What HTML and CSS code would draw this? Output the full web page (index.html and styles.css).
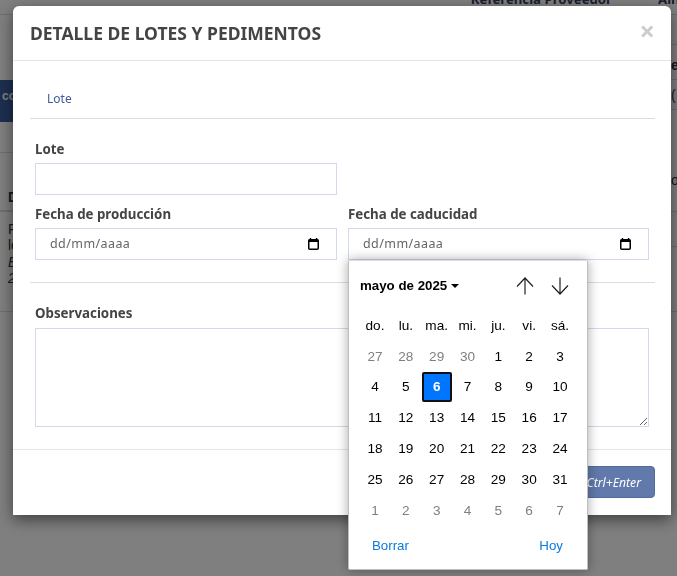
FILE: index.html
```html
<!DOCTYPE html>
<html lang="es">
<head>
<meta charset="utf-8">
<title>Detalle de lotes y pedimentos</title>
<link rel="stylesheet" href="styles.css">
</head>
<body>
<div class="page">
  <div class="bg-head"><span class="bg-ref">Referencia Proveedor</span><span class="bg-an">Aln</span></div>
  <div class="bg-strips">
    <div class="strip-left">
      <div class="sl sl-a"></div>
      <div class="sl sl-bar">co</div>
      <div class="sl sl-b"></div>
      <div class="sl sl-c">D</div>
      <div class="sl sl-d"><div>F</div><div>le</div><div><em>E</em></div><div><em>2</em></div></div>
    </div>
    <div class="strip-right">
      <div class="sr sr-a"></div>
      <div class="sr sr-b">ec</div>
      <div class="sr sr-c">(</div>
      <div class="sr sr-d">os</div>
      <div class="sr sr-e"></div>
      <div class="sr sr-f"></div>
    </div>
  </div>
</div>
<div class="backdrop"></div>
<div class="modal">
  <header class="modal-head">
    <h4 class="modal-title">DETALLE DE LOTES Y PEDIMENTOS</h4>
    <span class="close">&times;</span>
  </header>
  <div class="modal-body">
    <nav class="tabs"><a class="tab">Lote</a></nav>
    <form class="form">
      <div class="grid">
        <div class="field">
          <label class="label">Lote</label>
          <input class="control" type="text">
        </div>
        <div></div>
      </div>
      <div class="grid">
        <div class="field">
          <label class="label">Fecha de producción</label>
          <div class="control date"><span>dd/mm/aaaa</span>
            <svg class="cal-icon" width="11" height="12" viewBox="0 0 11 12"><path d="M2.5 0v1.5M8.5 0v1.5" stroke="#000" stroke-width="1.4" fill="none"/><rect x="0.75" y="1.8" width="9.5" height="9.45" rx="1" fill="none" stroke="#000" stroke-width="1.5"/><rect x="0.75" y="1.5" width="9.5" height="2.5" fill="#000"/></svg>
          </div>
        </div>
        <div class="field">
          <label class="label">Fecha de caducidad</label>
          <div class="control date"><span>dd/mm/aaaa</span>
            <svg class="cal-icon" width="11" height="12" viewBox="0 0 11 12"><path d="M2.5 0v1.5M8.5 0v1.5" stroke="#000" stroke-width="1.4" fill="none"/><rect x="0.75" y="1.8" width="9.5" height="9.45" rx="1" fill="none" stroke="#000" stroke-width="1.5"/><rect x="0.75" y="1.5" width="9.5" height="2.5" fill="#000"/></svg>
          </div>
        </div>
      </div>
    </form>
    <hr class="rule">
    <div class="form obs">
      <label class="label">Observaciones</label>
      <textarea class="control area"></textarea>
    </div>
  </div>
  <footer class="modal-foot">
    <button class="save" type="button">Ctrl+Enter</button>
  </footer>
</div>
<div class="picker">
  <div class="picker-head">
    <span class="month">mayo de 2025<i class="caret"></i></span>
    <span class="arrows">
      <svg width="18" height="18" viewBox="0 0 18 18"><path d="M9 17.5V1M1 9.5L9 1l8 8.5" fill="none" stroke="#222" stroke-width="1.2"/></svg>
      <svg width="18" height="18" viewBox="0 0 18 18"><path d="M9 .5V17M1 8.5L9 17l8-8.5" fill="none" stroke="#222" stroke-width="1.2"/></svg>
    </span>
  </div>
  <div class="days">
    <span>do.</span><span>lu.</span><span>ma.</span><span>mi.</span><span>ju.</span><span>vi.</span><span>sá.</span>
    <span class="off">27</span><span class="off">28</span><span class="off">29</span><span class="off">30</span><span>1</span><span>2</span><span>3</span>
    <span>4</span><span>5</span><span class="sel">6</span><span>7</span><span>8</span><span>9</span><span>10</span>
    <span>11</span><span>12</span><span>13</span><span>14</span><span>15</span><span>16</span><span>17</span>
    <span>18</span><span>19</span><span>20</span><span>21</span><span>22</span><span>23</span><span>24</span>
    <span>25</span><span>26</span><span>27</span><span>28</span><span>29</span><span>30</span><span>31</span>
    <span class="off">1</span><span class="off">2</span><span class="off">3</span><span class="off">4</span><span class="off">5</span><span class="off">6</span><span class="off">7</span>
  </div>
  <div class="picker-foot"><a>Borrar</a><a>Hoy</a></div>
</div>
</body>
</html>
```
FILE: styles.css
```css
* { box-sizing: border-box; }
html, body { margin: 0; height: 100%; overflow: hidden; }
body { background: #fff; font-family: "Noto Sans", sans-serif; color: #333; }

.page { height: 576px; overflow: hidden; display: flex; flex-direction: column; }
.bg-head { flex: none; border-bottom: 1px solid #ddd; display: flex; justify-content: flex-end; font-weight: 700; font-size: 13.2px; color: #34405c; line-height: 20px; margin-top: -11px; height: 26px; }
.bg-ref { margin-right: 46px; }
.bg-an { width: 19px; overflow: hidden; }
.bg-strips { flex: 1; display: flex; justify-content: space-between; font-family: "Liberation Sans", sans-serif; font-size: 14px; line-height: 16.4px; }
.strip-left { width: 13px; display: flex; flex-direction: column; overflow: hidden; }
.strip-right { width: 6px; display: flex; flex-direction: column; overflow: hidden; }
.sl-a { height: 65px; }
.sl-bar { height: 42px; background: #3b5f9f; color: #fff; font-weight: 700; font-size: 12px; line-height: 32px; padding-left: 2px; overflow: hidden; }
.sl-b { height: 31px; border-bottom: 1px solid #ddd; }
.sl-c { height: 59px; padding: 36px 0 0 8px; border-bottom: 2px solid #ddd; font-weight: 700; overflow: hidden; }
.sl-d { height: 100px; padding: 9px 0 0 8px; border-bottom: 1px solid #ddd; overflow: hidden; }
.sr { border-bottom: 1px solid #ddd; white-space: nowrap; }
.sr-a { height: 30px; }
.sr-b { height: 35px; padding-top: 12px; font-weight: 700; }
.sr-c { height: 30px; padding-top: 7px; }
.sr-d { height: 102px; padding-top: 62px; }
.sr-e { height: 35px; }
.sr-f { height: 65px; }

.backdrop { position: fixed; inset: 0; background: rgba(0, 0, 0, .5); }

.modal { position: fixed; left: 13px; top: 6px; width: 658px; height: 509px; background: #fff; border-radius: 6px 6px 0 0; box-shadow: 0 5px 15px rgba(0, 0, 0, .5); display: flex; flex-direction: column; }
.modal-head { height: 55px; flex: none; border-bottom: 1px solid #e5e5e5; display: flex; justify-content: space-between; align-items: center; padding: 0 17px; }
.modal-title { margin: 0; font-size: 17.5px; font-weight: 700; color: #444; line-height: 22px; }
.close { font-size: 27px; font-weight: 700; color: #ccc; line-height: 1; margin-top: -6px; margin-right: -1px; }

.modal-body { flex: 1; padding: 0 16px 0 17px; }
.tabs { height: 58px; padding: 25px 0 0 17px; border-bottom: 1px solid #ddd; }
.tab { font-size: 12px; line-height: 20px; color: #3f5a9b; }
.form { padding: 0 6px 0 5px; }
.grid { display: grid; grid-template-columns: 302px 301px; column-gap: 11px; }
.field { display: flex; flex-direction: column; }
.label { display: block; font-size: 13.3px; font-weight: 700; color: #444; line-height: 18px; height: 18px; margin: 21px 0 5px; }
.grid + .grid .label { margin-top: 10px; }
.control { height: 32px; border: 1px solid #d3d8ea; background: #fff; display: block; width: 100%; padding: 0; margin: 0; outline: 0; border-radius: 0; }
.date { display: flex; align-items: center; justify-content: space-between; padding: 0 17px 2px 14px; font-size: 12.5px; color: #666; letter-spacing: .42px; }
.cal-icon { flex: none; margin-top: 2px; }
.rule { margin: 22px 0 0; border: 0; border-top: 1px solid #ddd; height: 0; }
.obs .label { margin: 21px 0 6px; }
.area { height: 99px; resize: both; width: 100%; }

.modal-foot { height: 66px; flex: none; border-top: 1px solid #e5e5e5; display: flex; justify-content: flex-end; padding: 16px 16px 0; }
.save { height: 32px; width: 120px; border: 1px solid #52699b; border-radius: 4px; background: #6179ab; color: #fff; font: italic 12.2px "Noto Sans", sans-serif; text-align: right; padding: 0 13px; }

.picker { position: fixed; left: 348px; top: 260px; width: 240px; height: 310px; background: #fff; border: 1px solid #bfbfbf; border-top-color: #ddd; border-radius: 2px; box-shadow: 0 0 12px rgba(0, 0, 0, .35); font-family: "Liberation Sans", Arial, sans-serif; color: #000; display: flex; flex-direction: column; }
.picker-head { height: 49px; flex: none; display: flex; justify-content: space-between; align-items: center; padding: 0 18px 0 11px; }
.month { font-size: 13.3px; font-weight: 700; display: inline-flex; align-items: center; }
.caret { width: 0; height: 0; border: 4px solid transparent; border-top: 4px solid #000; border-bottom: 0; margin-left: 4px; }
.arrows { display: flex; gap: 17px; }
.days { display: grid; grid-template-columns: repeat(7, 30.83px); grid-auto-rows: 30.8px; padding-left: 10.6px; font-size: 13.6px; align-items: center; justify-items: center; }
.days span { display: flex; width: 30px; height: 30px; align-items: center; justify-content: center; }
.off { color: #808080; }
.sel { background: #0075ff; color: #fff; font-weight: 700; border: 2px solid #111; border-radius: 2px; }
.picker-foot { display: flex; justify-content: space-between; padding: 12px 24px 0 23px; font-size: 13.3px; line-height: 16px; color: #0a7be0; }
```
